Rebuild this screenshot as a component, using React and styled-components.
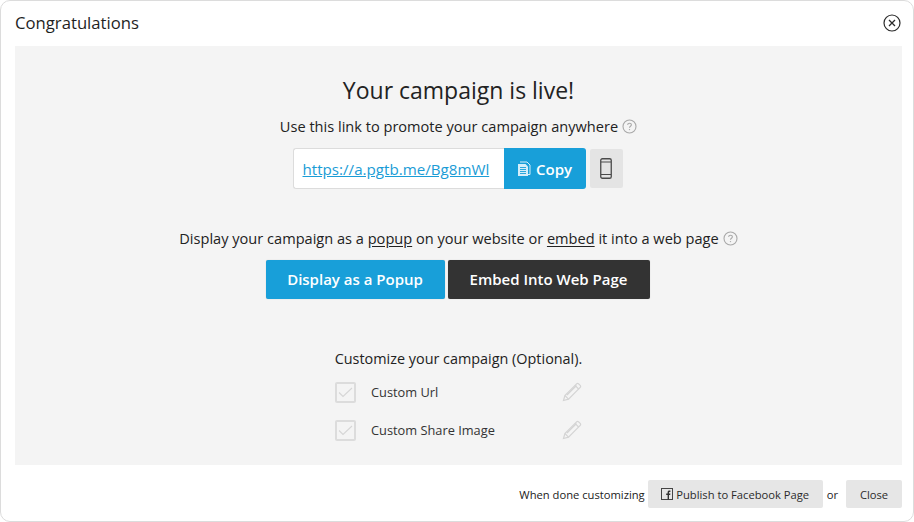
import React from 'react';
import styled, { createGlobalStyle } from 'styled-components';

const Global = createGlobalStyle`
  html, body { margin: 0; padding: 0; background: #fff; }
  body { font-family: "Open Sans", "Liberation Sans", sans-serif; color: #222; }
  * { box-sizing: border-box; }
`;
const Modal = styled.div`
  width: 914px; height: 522px; background: #fff; border: 1px solid #dcdcdc; border-radius: 10px;
  padding: 0 11px 0 14px; display: flex; flex-direction: column;
`;
const Header = styled.header`
  height: 45px; display: flex; align-items: center; justify-content: space-between; padding: 0 1px 2px 0;
`;
const Title = styled.h1`
  margin: 0; font-size: 16.7px; font-weight: 400; color: #1f1f1f;
`;
const Panel = styled.main`
  width: 887px; height: 419px; background: #f4f4f4; display: flex; flex-direction: column; align-items: center;
`;
const Headline = styled.h2`
  margin: 28px 0 0; font-size: 23px; line-height: 33px; font-weight: 400; color: #222;
`;
const Line = styled.p`
  margin: ${p => p.$top}px 0 0; font-size: ${p => p.$size || 14.58}px; line-height: 20px; color: #222; display: flex; align-items: center; white-space: pre;
`;
const Under = styled.span`
  text-decoration: underline; text-underline-offset: 2px;
`;
const LinkRow = styled.div`
  margin-top: 12px; display: flex; align-items: stretch; height: 41px; position: relative; left: -1px;
`;
const LinkBox = styled.div`
  width: 211px; background: #fff; border: 1px solid #dcdcdc; border-right: 0; border-radius: 3px 0 0 3px;
  display: flex; align-items: center; padding-left: 9px;
`;
const UrlLink = styled.a`
  font-size: 15.15px; color: #1a9cd6; text-decoration: underline; white-space: nowrap;
`;
const CopyButton = styled.button`
  width: 82px; border: 0; background: #189fd9; color: #fff; border-radius: 0 3px 3px 0; font: 600 15px "Open Sans", sans-serif;
  display: flex; align-items: center; justify-content: center; gap: 5px; padding: 0; margin-right: 4px;
`;
const PhoneButton = styled.button`
  width: 33px; margin: 1px 0 1px 0; border: 0; background: #e4e4e4; border-radius: 2px; display: flex; align-items: center; justify-content: center; padding: 0;
`;
const ButtonRow = styled.div`
  margin-top: 12px; display: flex; gap: 3px; position: relative; left: -1px;
`;
const BigButton = styled.button`
  height: 39px; width: ${p => p.$w}px; border: 0; border-radius: 2px; background: ${p => p.$bg}; color: #fff;
  font: 600 15px "Open Sans", sans-serif; padding: 0 0 1px; box-shadow: 0 0 1px rgba(0,0,0,.25);
`;
const OptionList = styled.div`
  margin-top: 12px; width: 247px; display: flex; flex-direction: column; gap: 16px;
`;
const Option = styled.div`
  height: 22px; display: flex; align-items: center;
`;
const Check = styled.span`
  width: 21px; height: 21px; border: 2px solid #dcdcdc; border-radius: 2px; background: #f4f4f4; display: flex; align-items: center; justify-content: center; flex: none;
`;
const OptionLabel = styled.span`
  margin-left: 15px; font-size: 12.8px; color: #333; flex: 1;
`;
const Footer = styled.footer`
  flex: 1; display: flex; align-items: center; justify-content: flex-end; font-size: 11.2px; color: #222; padding-top: 2px;
`;
const GreyButton = styled.button`
  height: 28px; width: ${p => p.$w}px; border: 0; border-radius: 2px; background: #e6e6e6; color: #2b2b2b; font: 400 11.2px "Open Sans", sans-serif;
  display: flex; align-items: center; justify-content: center; gap: 3px; padding: 0;
`;
const Or = styled.span`
  margin: 0 8px 0 4px;
`;
const Done = styled.span`
  margin-right: 3px;
`;

const Help = () => (
  <svg width="15" height="15" viewBox="0 0 15 15" style={{ marginLeft: 4 }}>
    <circle cx="7.5" cy="7.5" r="6.5" fill="none" stroke="#a8a8a8" strokeWidth="1.1" />
    <path d="M5.6 5.9c.1-1.1.9-1.7 1.9-1.7 1.1 0 1.9.7 1.9 1.6 0 1.4-1.9 1.5-1.9 3" fill="none" stroke="#a8a8a8" strokeWidth="1.1" />
    <circle cx="7.5" cy="10.6" r=".7" fill="#a8a8a8" />
  </svg>
);
const CloseIcon = () => (
  <svg width="18" height="18" viewBox="0 0 18 18">
    <circle cx="9" cy="9" r="8" fill="none" stroke="#2a2a2a" strokeWidth="1.2" />
    <path d="M6 6l6 6M12 6l-6 6" stroke="#2a2a2a" strokeWidth="1.3" />
  </svg>
);
const CopyIcon = () => (
  <svg width="14" height="16" viewBox="0 0 14 16">
    <path d="M3 1h7l3 3v9.5h-2" fill="none" stroke="#d5eef9" strokeWidth="1" />
    <path d="M1 3h7.5l2.5 2.5V15H1z" fill="#d5eef9" />
    <path d="M3 6.5h6M3 8.5h6M3 10.5h6M3 12.5h6" stroke="#189fd9" strokeWidth=".9" />
  </svg>
);
const PhoneIcon = () => (
  <svg width="12" height="21" viewBox="0 0 12 21">
    <rect x=".75" y=".75" width="10.5" height="19.5" rx="1.6" fill="none" stroke="#4a4a4a" strokeWidth="1.3" />
    <path d="M1 4h10M1 16.5h10" stroke="#4a4a4a" strokeWidth="1.1" />
  </svg>
);
const Tick = () => (
  <svg width="15" height="11" viewBox="0 0 15 11">
    <path d="M1 5.5l4 4L14 1" fill="none" stroke="#d6d6d6" strokeWidth="1.1" />
  </svg>
);
const Pencil = () => (
  <svg width="20" height="20" viewBox="0 0 20 20">
    <path d="M1.5 18.5l1.4-5L14.6 1.8c.6-.6 1.4-.6 2 0l1.6 1.6c.6.6.6 1.4 0 2L6.5 17.1z" fill="none" stroke="#d4d4d4" strokeWidth="1.2" />
    <path d="M2.9 13.5l3.6 3.6M13 3.4l3.6 3.6M5 13l9.5-9.5" fill="none" stroke="#d4d4d4" strokeWidth="1.1" />
  </svg>
);
const FbIcon = () => (
  <svg width="12" height="12" viewBox="0 0 12 12">
    <rect x=".5" y=".5" width="11" height="11" fill="none" stroke="#444" />
    <path d="M6.6 11.5V7H5.2V5.4h1.4V4.2c0-1.2.7-1.8 1.8-1.8h1v1.5h-.7c-.5 0-.7.2-.7.7v.8h1.4L9.2 7H8v4.5z" fill="#333" />
  </svg>
);

export default function App() {
  return (
    <Modal>
      <Global />
      <Header>
        <Title>Congratulations</Title>
        <CloseIcon />
      </Header>
      <Panel>
        <Headline>Your campaign is live!</Headline>
        <Line $top={9}>Use this link to promote your campaign anywhere<Help /></Line>
        <LinkRow>
          <LinkBox><UrlLink>https://a.pgtb.me/Bg8mWl</UrlLink></LinkBox>
          <CopyButton><CopyIcon />Copy</CopyButton>
          <PhoneButton><PhoneIcon /></PhoneButton>
        </LinkRow>
        <Line $top={39}>Display your campaign as a <Under>popup</Under> on your website or <Under>embed</Under> it into a web page<Help /></Line>
        <ButtonRow>
          <BigButton $w={179} $bg="#189fd9">Display as a Popup</BigButton>
          <BigButton $w={202} $bg="#333333">Embed Into Web Page</BigButton>
        </ButtonRow>
        <Line $top={50} $size={14.4}>Customize your campaign (Optional).</Line>
        <OptionList>
          <Option><Check><Tick /></Check><OptionLabel>Custom Url</OptionLabel><Pencil /></Option>
          <Option><Check><Tick /></Check><OptionLabel>Custom Share Image</OptionLabel><Pencil /></Option>
        </OptionList>
      </Panel>
      <Footer>
        <Done>When done customizing</Done>
        <GreyButton $w={175}><FbIcon />Publish to Facebook Page</GreyButton>
        <Or>or</Or>
        <GreyButton $w={56}>Close</GreyButton>
      </Footer>
    </Modal>
  );
}
